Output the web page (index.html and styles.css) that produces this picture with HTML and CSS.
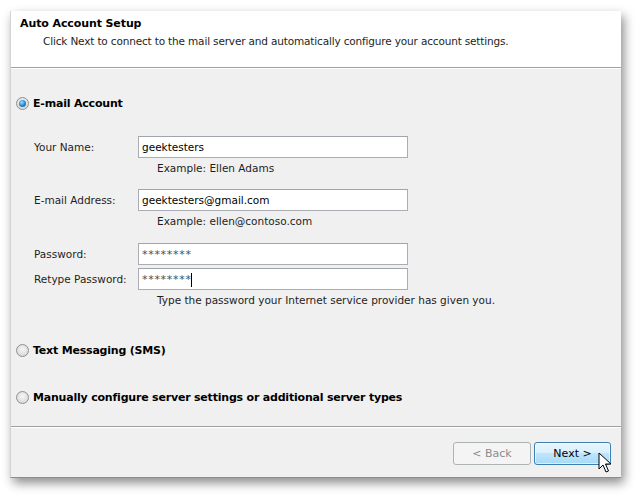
FILE: index.html
```html
<!DOCTYPE html>
<html>
<head>
<meta charset="utf-8">
<link rel="stylesheet" href="styles.css">
</head>
<body>
<div class="window">
  <div class="header">
    <div class="title">Auto Account Setup</div>
    <div class="subtitle">Click Next to connect to the mail server and automatically configure your account settings.</div>
  </div>
  <div class="content">
    <div class="option first">
      <span class="radio checked"><span class="dot"></span></span>
      <span class="opt-label">E-mail Account</span>
    </div>
    <div class="form">
      <div class="row r-name">
        <span class="label">Your Name:</span>
        <span class="input">geektesters</span>
      </div>
      <div class="hint">Example: Ellen Adams</div>
      <div class="row r-mail">
        <span class="label">E-mail Address:</span>
        <span class="input">geektesters@gmail.com</span>
      </div>
      <div class="hint">Example: ellen@contoso.com</div>
      <div class="row r-pass">
        <span class="label">Password:</span>
        <span class="input pw">********</span>
      </div>
      <div class="row r-retype">
        <span class="label">Retype Password:</span>
        <span class="input pw">********<span class="caret"></span></span>
      </div>
      <div class="hint">Type the password your Internet service provider has given you.</div>
    </div>
    <div class="option sms">
      <span class="radio"></span>
      <span class="opt-label">Text Messaging (SMS)</span>
    </div>
    <div class="option manual">
      <span class="radio"></span>
      <span class="opt-label">Manually configure server settings or additional server types</span>
    </div>
  </div>
  <div class="footer">
    <span class="btn back">&lt; Back</span>
    <span class="btn next">Next &gt;
      <svg class="cursor" width="14" height="22" viewBox="0 0 14 22">
        <path d="M1 1 L1 17 L5 13 L8 20 L10.5 19 L7.5 12 L13 12 Z" fill="#fff" stroke="#000" stroke-width="1" stroke-linejoin="round"/>
      </svg>
    </span>
  </div>
</div>
</body>
</html>
```

FILE: styles.css
```css
* { box-sizing: border-box; }
html, body { margin: 0; padding: 0; background: #fff; }
body {
  font-family: "DejaVu Sans", Tahoma, sans-serif;
  font-size: 10.5px;
  color: #1e1e1e;
  width: 640px;
  height: 497px;
  overflow: hidden;
}
.window {
  margin: 11px 0 0 10px;
  width: 611px;
  height: 467px;
  display: flex;
  flex-direction: column;
  border-left: 1px solid #d4d4d4;
  border-bottom: 1px solid #8c8c8c;
  box-shadow: 3px 5px 10px rgba(0,0,0,0.45);
  background: #f0f0f0;
}
.header {
  height: 57px;
  background: #fff;
  border-bottom: 1px solid #a0a0a0;
  box-shadow: 0 1px 0 #fff;
  padding: 6px 0 0 9px;
}
.title {
  font-weight: bold;
  font-size: 11px;
  line-height: 14px;
  color: #000;
  letter-spacing: -0.1px;
}
.subtitle {
  margin: 3px 0 0 23px;
  line-height: 14px;
  letter-spacing: -0.16px;
}
.content {
  flex: 1;
  padding: 27px 0 0 5px;
  display: flex;
  flex-direction: column;
}
.option {
  display: flex;
  align-items: center;
  gap: 4px;
  height: 16px;
}
.opt-label {
  font-weight: bold;
  font-size: 11px;
  color: #000;
  letter-spacing: -0.2px;
}
.radio {
  width: 13px;
  height: 13px;
  border-radius: 50%;
  border: 1px solid #8e8f8f;
  background: radial-gradient(circle at 50% 40%, #f6f6f6 0%, #dcdcdc 70%, #cfcfcf 100%);
  display: flex;
  align-items: center;
  justify-content: center;
}
.radio.checked .dot {
  width: 7px;
  height: 7px;
  border-radius: 50%;
  background: radial-gradient(circle at 40% 35%, #9fe0ff 0%, #2a8ad0 50%, #0d4a80 100%);
}
.form {
  margin: 25px 0 0 18px;
  display: flex;
  flex-direction: column;
}
.row {
  display: flex;
  align-items: center;
  height: 22px;
}
.label { width: 104px; }
.input {
  width: 270px;
  height: 22px;
  background: #fff;
  border: 1px solid #abadb3;
  border-top-color: #a0a4ab;
  padding: 0 3px;
  line-height: 20px;
  display: flex;
  align-items: center;
  color: #000;
}
.input.pw {
  color: #3e5060;
  font-size: 11px;
  letter-spacing: 0.7px;
  align-items: flex-start;
  padding-top: 1px;
}
.caret {
  width: 1px;
  height: 14px;
  background: #000;
  margin: 3px 0 0 -1px;
}
.hint {
  margin-left: 123px;
  line-height: 14px;
  margin-top: 3px;
}
.r-mail { margin-top: 14px; }
.r-pass { margin-top: 15px; }
.r-retype { margin-top: 3px; }
.sms { margin-top: 35px; }
.manual { margin-top: 31px; }
.footer {
  height: 51px;
  border-top: 1px solid #a0a0a0;
  box-shadow: inset 0 1px 0 #fff;
  display: flex;
  justify-content: flex-end;
  align-items: flex-start;
  padding: 15px 10px 0 0;
  gap: 3px;
}
.btn {
  position: relative;
  height: 23px;
  border-radius: 3px;
  display: flex;
  align-items: center;
  justify-content: center;
  font-size: 11px;
}
.back {
  width: 78px;
  border: 1px solid #adb2b5;
  background: #f4f4f4;
  color: #8b8b8b;
}
.next {
  width: 77px;
  border: 1px solid #3c7fb1;
  background: linear-gradient(#eaf6fd 0%, #d9f0fc 45%, #bee6fd 50%, #a7d9f5 100%);
  color: #000;
  box-shadow: inset 0 0 0 1px rgba(255,255,255,0.6);
}
.cursor {
  position: absolute;
  left: 63px;
  top: 9px;
}
```
